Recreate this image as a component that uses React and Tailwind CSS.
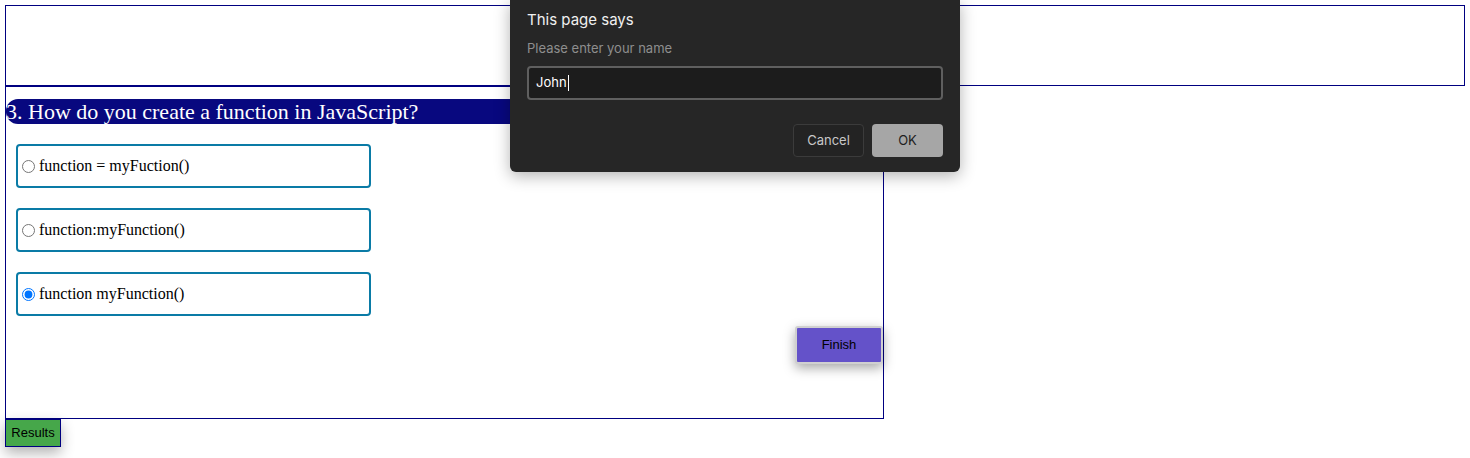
export default function App() {
  const options = [
    { label: "function = myFuction()", checked: false },
    { label: "function:myFunction()", checked: false },
    { label: "function myFunction()", checked: true },
  ];
  return (
    <div className="relative h-[458px] w-[1470px] overflow-hidden bg-white pt-[5px]">
      <div className="mx-[5px] h-[81px] border border-[#000080]" />
      <div className="ml-[5px] h-[333px] w-[879px] border border-[#000080]">
        <div className="mt-[12px] flex h-[25px] w-[870px] items-center rounded-l-[12px] bg-[#08087f] text-[22px] leading-none text-white [font-family:'Liberation_Serif',serif]">
          3. How do you create a function in JavaScript?
        </div>
        <div className="mt-[20px] flex flex-col gap-[20px] pl-[10px]">
          {options.map((o) => (
            <label
              key={o.label}
              className="flex h-[44px] w-[355px] items-center rounded-[4px] border-2 border-[#0a7ba6] pl-[4px] text-[16px] text-black [font-family:'Liberation_Serif',serif]"
            >
              <input
                type="radio"
                name="q3"
                defaultChecked={o.checked}
                className="m-0 mr-[4px] h-[13px] w-[13px]"
              />
              {o.label}
            </label>
          ))}
        </div>
        <div className="mt-[10px] flex justify-end">
          <button className="h-[38px] w-[88px] rounded-[3px] border-2 border-[#d0d0d0] bg-[#6452c9] text-[13px] text-black shadow-[0_4px_12px_rgba(0,0,0,0.35)] [font-family:'Liberation_Sans',sans-serif]">
            Finish
          </button>
        </div>
      </div>
      <button className="ml-[5px] h-[28px] w-[56px] border border-[#000080] bg-[#46a74a] text-[13px] text-black shadow-[0_6px_14px_rgba(0,0,0,0.3)] [font-family:'Liberation_Sans',sans-serif]">
        Results
      </button>

      <div className="absolute left-[510px] top-0 h-[172px] w-[450px] rounded-b-[6px] bg-[#262626] px-[17px] pt-[11px] shadow-[0_4px_16px_rgba(0,0,0,0.3)] [font-family:Inter,'Noto_Sans',sans-serif]">
        <div className="text-[15px] leading-[18px] text-[#f0f0f0]">This page says</div>
        <div className="mt-[11px] text-[13px] leading-[16px] text-[#8e8e8e]">Please enter your name</div>
        <div className="mt-[10px] flex h-[34px] w-[416px] items-center rounded-[4px] border-2 border-[#5f5f5f] bg-[#1c1c1c] pl-[7px] text-[13px] text-white">
          John<span className="ml-[1px] inline-block h-[16px] w-px bg-white" />
        </div>
        <div className="mt-[24px] flex justify-end gap-[8px]">
          <div className="flex h-[33px] w-[71px] items-center justify-center rounded-[4px] border border-[#3b3b3b] bg-[#232323] text-[13px] text-[#c8c8c8]">
            Cancel
          </div>
          <div className="flex h-[33px] w-[71px] items-center justify-center rounded-[4px] bg-[#a6a6a6] text-[13px] text-[#1e1e1e]">
            OK
          </div>
        </div>
      </div>
    </div>
  );
}
